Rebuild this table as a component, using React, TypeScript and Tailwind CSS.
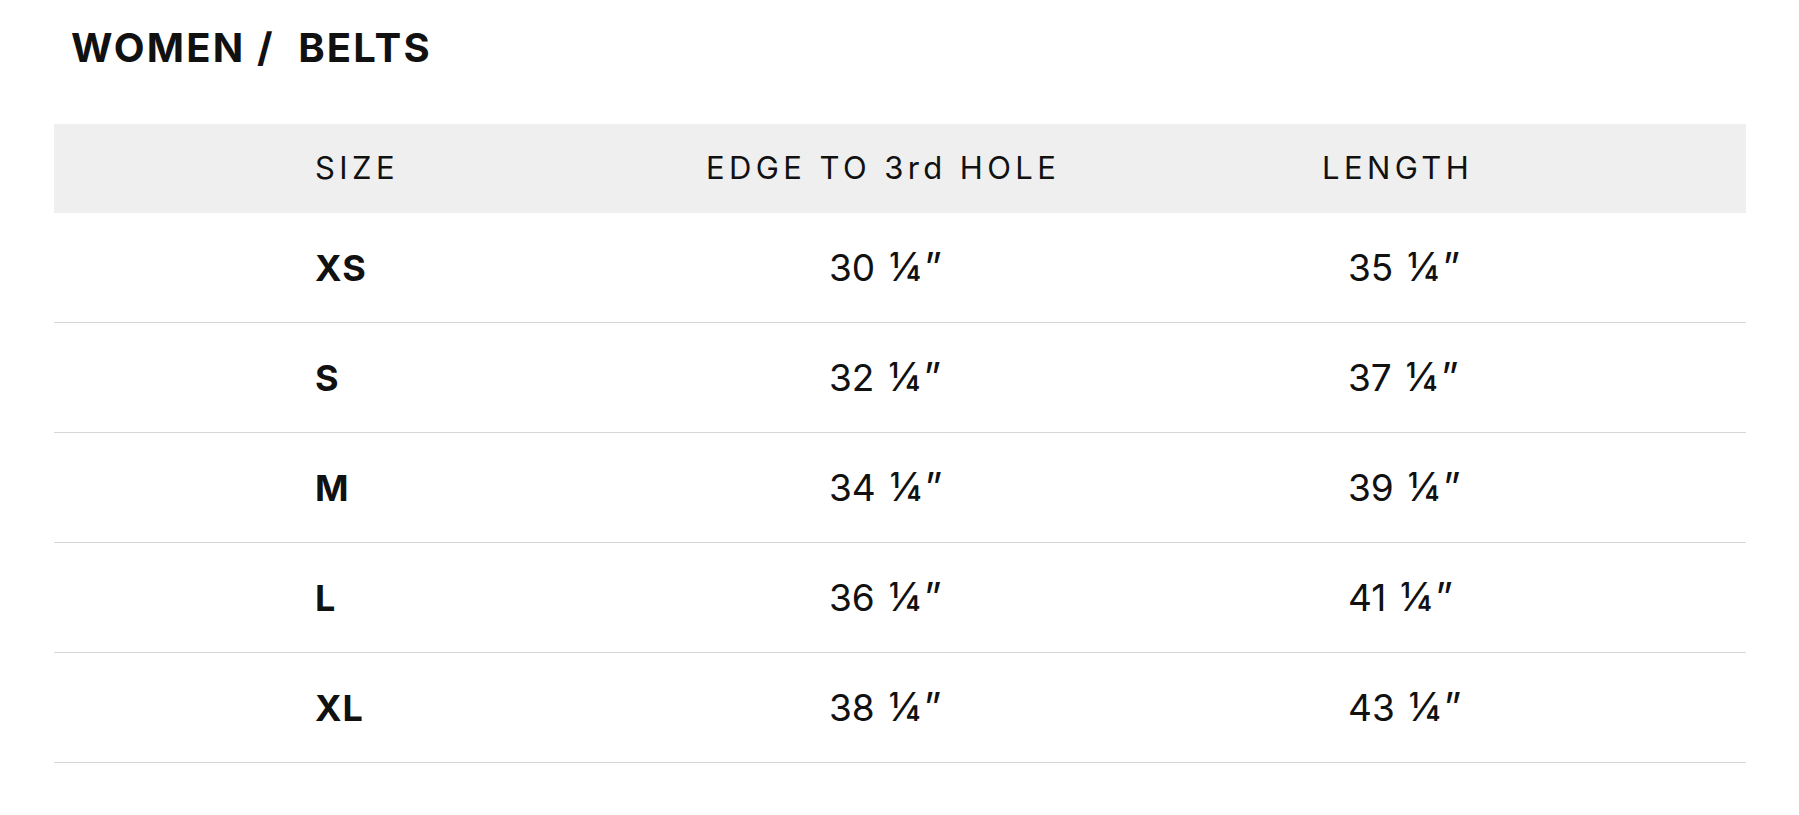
import React from "react";

const rows = [
  { size: "XS", edge: "30", length: "35" },
  { size: "S", edge: "32", length: "37" },
  { size: "M", edge: "34", length: "39" },
  { size: "L", edge: "36", length: "41" },
  { size: "XL", edge: "38", length: "43" },
];

const Inches = ({ value }: { value: string }) => (
  <span className="whitespace-nowrap">
    {value}
    <span className="ml-[14px] text-[40px] tracking-[3px]">¼”</span>
  </span>
);

const App = () => {
  return (
    <div className="min-h-[815px] bg-white text-[#111] font-['Inter',sans-serif]">
      <h1 className="pl-[71px] pt-[24px] text-[40px] leading-[48px] font-bold tracking-[2.2px]">
        WOMEN /&nbsp; BELTS
      </h1>

      <div className="mt-[52px] ml-[54px] w-[1692px]">
        {/* header */}
        <div className="grid grid-cols-[652px_519px_1fr] h-[89px] items-center bg-[#efefef] text-[31px] tracking-[4.4px]">
          <div className="pl-[261px]">SIZE</div>
          <div>EDGE TO 3rd HOLE</div>
          <div className="pl-[97px]">LENGTH</div>
        </div>

        {rows.map((row) => (
          <div
            key={row.size}
            className="grid grid-cols-[652px_519px_1fr] h-[110px] items-center border-b border-[#d6d6d6] text-[37px] leading-[44px]"
          >
            <div className="pl-[261px] font-bold tracking-[1px] text-[36px]">{row.size}</div>
            <div className="pl-[123px]">
              <Inches value={row.edge} />
            </div>
            <div className="pl-[123px]">
              <Inches value={row.length} />
            </div>
          </div>
        ))}
      </div>
    </div>
  );
};

export default App;
